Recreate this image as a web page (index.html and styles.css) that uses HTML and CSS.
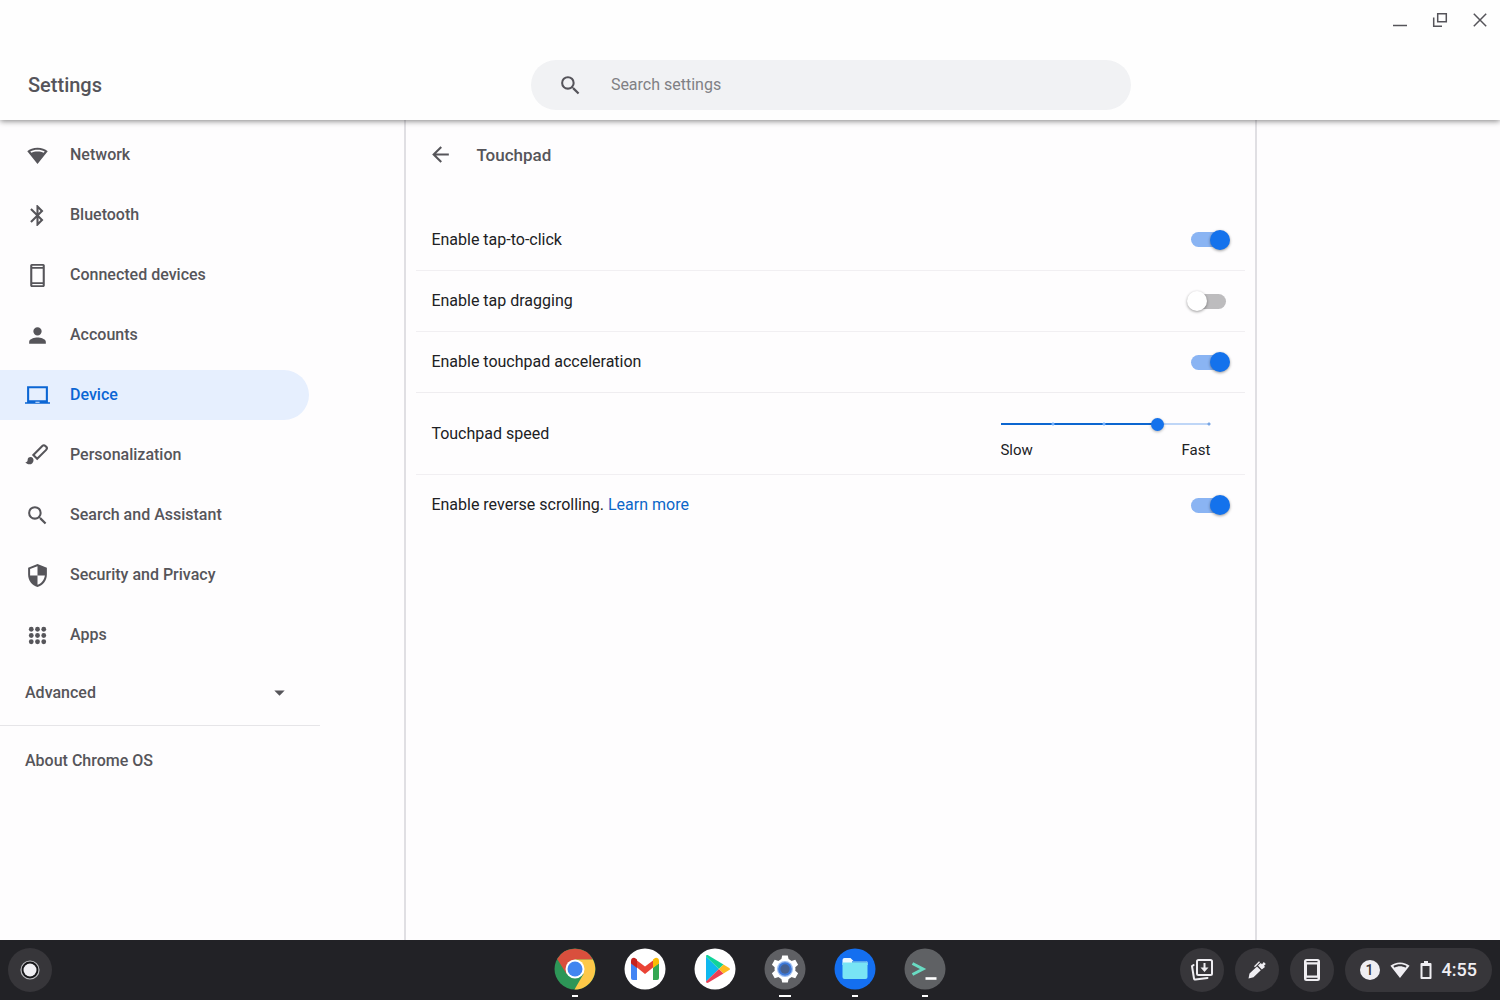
FILE: index.html
```html
<!DOCTYPE html>
<html lang="en">
<head>
<meta charset="utf-8">
<meta name="viewport" content="width=device-width, initial-scale=1">
<title>Settings - Touchpad</title>
<link rel="stylesheet" href="styles.css">
</head>
<body>
<header class="header">
  <div class="titlebar">
    <button class="window-button" aria-label="Minimize"><svg width="16" height="16" viewBox="0 0 16 16"><path d="M1 13.500h14" class="line"/></svg></button>
    <button class="window-button" aria-label="Restore"><svg width="16" height="16" viewBox="0 0 16 16"><path d="M5.700 1.700h8.600v8h-8.600zM1.700 5.500v8.800h8.300" class="line"/></svg></button>
    <button class="window-button" aria-label="Close"><svg width="16" height="16" viewBox="0 0 16 16"><path d="M1.800 1.800l12.400 12.400M14.200 1.800L1.800 14.200" class="line"/></svg></button>
  </div>
  <div class="toolbar columns">
    <h1 class="title">Settings</h1>
    <label class="search">
      <svg class="icon" viewBox="0 0 24 24"><path d="M15.500 14h-.79l-.28-.27A6.470 6.470 0 0 0 16 9.500 6.500 6.500 0 1 0 9.500 16c1.610 0 3.090-.59 4.230-1.570l.27.28v.79l5 4.990L20.490 19l-4.990-5zm-6 0C7.010 14 5 11.990 5 9.500S7.010 5 9.500 5 14 7.010 14 9.500 11.990 14 9.500 14z"/></svg>
      <input class="search-input" type="text" placeholder="Search settings" aria-label="Search settings">
    </label>
  </div>
</header>

<div class="body columns">
  <nav class="sidebar" aria-label="Settings sections">
    <a class="nav-item" href="#network"><svg class="icon" viewBox="0 0 24 24"><path fill-rule="evenodd" d="M12 4.500C8 4.500 4.500 5.800 2.200 7.900L12 20.200 21.800 7.900C19.500 5.800 16 4.500 12 4.500zM5.100 8.200C7 7.100 9.400 6.500 12 6.500s5 .6 6.900 1.700l-.9 1.200C16.300 8.600 14.200 8.200 12 8.200s-4.300.4-6 1.200z"/></svg>Network</a>
    <a class="nav-item" href="#bluetooth"><svg class="icon" viewBox="0 0 24 24"><path d="M17.710 7.710L12 2h-1v7.590L6.410 5 5 6.410 10.590 12 5 17.590 6.410 19 11 14.410V22h1l5.710-5.710-4.300-4.290 4.300-4.290zM13 5.830l1.880 1.880L13 9.590V5.830zm1.880 10.460L13 18.170v-3.760l1.880 1.880z"/></svg>Bluetooth</a>
    <a class="nav-item" href="#devices"><svg class="icon" viewBox="0 0 24 24"><path fill-rule="evenodd" d="M6.500 1h11C18.300 1 19 1.700 19 2.500v19c0 .8-.7 1.500-1.500 1.500h-11C5.700 23 5 22.300 5 21.500v-19C5 1.700 5.700 1 6.500 1zM7 2.600v1.300h10V2.600zM7 5.500v13h10v-13zM7 20.100v1.300h10v-1.300z"/></svg>Connected devices</a>
    <a class="nav-item" href="#accounts"><svg class="icon" viewBox="0 0 24 24"><path d="M12 12a4 4 0 1 0 0-8 4 4 0 0 0 0 8zm0 2c-2.670 0-8 1.340-8 4v2h16v-2c0-2.660-5.330-4-8-4z"/></svg>Accounts</a>
    <a class="nav-item selected" href="#device" aria-current="page"><svg class="icon" viewBox="0 0 24 24"><path fill-rule="evenodd" d="M2 3h20v15.500h2V20H0v-1.500h2zM4 5v11.500h16V5zM10 18v.9h4V18z"/></svg>Device</a>
    <a class="nav-item" href="#personalization"><svg class="icon" viewBox="0 0 24 24"><path d="M5.500 13.500a3 3 0 0 0-3 3c0 1.300-1.200 2-2.300 2 1 1.200 2.500 2 4 2a4 4 0 0 0 4-4c0-1.700-1.100-3-2.700-3z"/><path d="M8 11.500l8.600-8.600c1-1 2.100-.9 2.900-.1l.9.9c.8.800.9 1.900-.1 2.900l-8.600 8.600z" fill="none" stroke="currentColor" stroke-width="2"/></svg>Personalization</a>
    <a class="nav-item" href="#search"><svg class="icon" viewBox="0 0 24 24"><path d="M15.500 14h-.79l-.28-.27A6.470 6.470 0 0 0 16 9.500 6.500 6.500 0 1 0 9.500 16c1.610 0 3.090-.59 4.230-1.570l.27.28v.79l5 4.990L20.490 19l-4.990-5zm-6 0C7.010 14 5 11.990 5 9.500S7.010 5 9.500 5 14 7.010 14 9.500 11.990 14 9.500 14z"/></svg>Search and Assistant</a>
    <a class="nav-item" href="#privacy"><svg class="icon" viewBox="0 0 24 24"><path fill-rule="evenodd" d="M12 1L3 4.500V11c0 5.550 3.840 10.740 9 12 5.160-1.260 9-6.450 9-12V4.500zM12 3v9H4.900V5.700zM12 12h7.100c-.6 4.200-3.300 7.700-7.100 8.900z"/></svg>Security and Privacy</a>
    <a class="nav-item" href="#apps"><svg class="icon" viewBox="0 0 24 24"><g><circle cx="6" cy="6" r="2.300"/><circle cx="12" cy="6" r="2.300"/><circle cx="18" cy="6" r="2.300"/><circle cx="6" cy="12" r="2.300"/><circle cx="12" cy="12" r="2.300"/><circle cx="18" cy="12" r="2.300"/><circle cx="6" cy="18" r="2.300"/><circle cx="12" cy="18" r="2.300"/><circle cx="18" cy="18" r="2.300"/></g></svg>Apps</a>
    <button class="advanced" aria-expanded="false">Advanced<svg class="icon" viewBox="0 0 24 24"><path d="M7 10l5 5 5-5z"/></svg></button>
    <a class="about" href="#about">About Chrome OS</a>
  </nav>

  <main class="panel">
    <div class="panel-header">
      <button class="back" aria-label="Back"><svg class="icon" viewBox="0 0 24 24"><path d="M20 11H7.830l5.590-5.590L12 4l-8 8 8 8 1.410-1.410L7.830 13H20v-2z"/></svg></button>
      <h2 class="subtitle">Touchpad</h2>
    </div>
    <div class="row"><label for="tap">Enable tap-to-click</label><input class="toggle" id="tap" type="checkbox" checked></div>
    <div class="row"><label for="drag">Enable tap dragging</label><input class="toggle" id="drag" type="checkbox"></div>
    <div class="row"><label for="accel">Enable touchpad acceleration</label><input class="toggle" id="accel" type="checkbox" checked></div>
    <div class="row row-tall">
      <label for="speed">Touchpad speed</label>
      <div class="speed">
        <input class="slider" id="speed" type="range" min="1" max="5" value="4">
        <div class="speed-labels"><span>Slow</span><span>Fast</span></div>
      </div>
    </div>
    <div class="row"><span><label for="reverse">Enable reverse scrolling.</label> <a class="link" href="#learn">Learn more</a></span><input class="toggle" id="reverse" type="checkbox" checked></div>
  </main>
</div>

<footer class="shelf">
  <div class="shelf-start">
    <button class="tray-button" aria-label="Launcher"><svg width="22" height="22" viewBox="0 0 22 22"><circle cx="11" cy="11" r="9" fill="#161619" stroke="#b8b8bc" stroke-width="1.200"/><circle cx="11" cy="11" r="6.500" fill="#f0eff3"/></svg></button>
  </div>
  <div class="apps">
    <button class="app running" aria-label="Chrome"><svg width="42" height="42" viewBox="0 0 42 42"><circle cx="21" cy="21" r="20.500" fill="#2d9657"/><path d="M21 21L3.200 11A20.500 20.500 0 0 1 38.900 11.500H21z" fill="#d94f3d"/><path d="M21 11.500h17.900A20.500 20.500 0 0 1 20.500 41.500L29.500 26z" fill="#fdc848"/><path d="M3.200 11L12.600 26 18 11.500z" fill="#d94f3d"/><circle cx="21" cy="21" r="9.500" fill="#fff"/><circle cx="21" cy="21" r="7.500" fill="#4285f0"/></svg></button>
    <button class="app" aria-label="Gmail"><svg width="42" height="42" viewBox="0 0 42 42"><circle cx="21" cy="21" r="20.500" fill="#fff"/><path d="M7 15l6 4.500V32H9a2 2 0 0 1-2-2z" fill="#4285f4"/><path d="M29 19.500l6-4.500v15a2 2 0 0 1-2 2h-4z" fill="#34a853"/><path d="M13 12.500l8 6 8-6v7L21 26l-8-6.500z" fill="#ea4335"/><path d="M7 15v-2c0-3 3-4.200 5-2.300l1 .8v8.500l-6-4.500z" fill="#c5221f"/><path d="M35 15v-2c0-3-3-4.200-5-2.300l-1 .8v8.500l6-4.500z" fill="#fbbc04"/></svg></button>
    <button class="app" aria-label="Play Store"><svg width="42" height="42" viewBox="0 0 42 42"><circle cx="21" cy="21" r="20.500" fill="#fff"/><path d="M12 8.500v25l13-12.500z" fill="#10b8ef"/><path d="M12 8.500c0-1.500 1.200-1.800 2.500-1.100L29.500 16.500 25 21z" fill="#12d39a"/><path d="M12 33.500c0 1.500 1.200 1.800 2.500 1.100L29.500 25.500 25 21z" fill="#ec4055"/><path d="M29.500 16.500l5.700 3.400c1 .7 1 1.600 0 2.200l-5.700 3.400L25 21z" fill="#fdbb20"/></svg></button>
    <button class="app running active" aria-label="Settings"><svg width="42" height="42" viewBox="0 0 42 42"><circle cx="21" cy="21" r="20.500" fill="#5f6064"/><g fill="#fff"><circle cx="21" cy="21" r="10.500"/><path id="tooth" d="M17 13l1.200-5.500h5.600L25 13v16l-1.200 5.500h-5.600L17 29z"/><use href="#tooth" transform="rotate(60 21 21)"/><use href="#tooth" transform="rotate(120 21 21)"/></g><circle cx="21" cy="21" r="8" fill="#9dbdf0"/><circle cx="21" cy="21" r="6.800" fill="#3d78d8"/><circle cx="21" cy="21" r="4.700" fill="#48618f"/></svg></button>
    <button class="app running" aria-label="Files"><svg width="42" height="42" viewBox="0 0 42 42"><circle cx="21" cy="21" r="20.500" fill="#146ff0"/><path d="M8.500 12a2 2 0 0 1 2-2h6l3 3H32a1.500 1.500 0 0 1 1.500 1.500V17h-25z" fill="#edf8ff"/><path d="M18 13h14a1.500 1.500 0 0 1 1.500 1.500V16H18z" fill="#5ba8ed"/><path d="M8.500 14.500h25V29a2 2 0 0 1-2 2h-21a2 2 0 0 1-2-2z" fill="#78e4f5"/></svg></button>
    <button class="app running" aria-label="Terminal"><svg width="42" height="42" viewBox="0 0 42 42"><circle cx="21" cy="21" r="20.500" fill="#5f6164"/><path d="M8.500 15.500l10.500 5.500-10.500 5.500" fill="none" stroke="#69dbc3" stroke-width="3"/><path d="M21.500 29.200h11v2.600h-11z" fill="#fff"/></svg></button>
  </div>
  <div class="tray">
    <button class="tray-button" aria-label="Holding space"><svg width="24" height="24" viewBox="0 0 24 24"><g fill="none" stroke="currentColor" stroke-width="2"><rect x="7" y="2" width="15" height="15" rx="1.500"/><path d="M3.600 7L2 8.200l2 12.300c.1.800.7 1.200 1.500 1.100L17.500 20" stroke-linecap="round"/></g><path d="M13.500 5h2v4.500h3l-4 4.500-4-4.500h3z"/></svg></button>
    <button class="tray-button" aria-label="Stylus tools"><svg width="24" height="24" viewBox="0 0 24 24"><path d="M3.500 20.500l1-5 7.500-7 3.800 3.800-7.300 7zM13 7.600l2.800-2.600 1.200 1.200L18.800 4l2 2-1.800 1.800 1 1.200-3.200 2.400z"/><path d="M9.500 8.800l5-5" fill="none" stroke="currentColor" stroke-width="1.500"/></svg></button>
    <button class="tray-button" aria-label="Phone Hub"><svg width="24" height="24" viewBox="0 0 24 24"><path fill-rule="evenodd" d="M6.500 1h11A2.500 2.500 0 0 1 20 3.500v17a2.500 2.500 0 0 1-2.500 2.500h-11A2.500 2.500 0 0 1 4 20.500v-17A2.500 2.500 0 0 1 6.500 1zM7 6.500v11h10v-11zM6.500 3v1.200h11V3zM6.500 19.800V21h11v-1.200z"/></svg></button>
    <button class="status" aria-label="Status, 4:55">
      <span class="badge">1</span>
      <svg width="20" height="20" viewBox="0 0 24 24"><path fill-rule="evenodd" d="M12 3C7.500 3 3.500 4.500.5 7L12 21.500 23.500 7C20.500 4.500 16.500 3 12 3zM4 7.300C6.200 5.900 9 5.200 12 5.200s5.800.7 8 2.100l-1.500 1.900C16.600 8.200 14.500 7.500 12 7.500s-4.600.7-6.500 1.700z"/></svg>
      <svg width="12" height="20" viewBox="0 0 12 20"><path fill-rule="evenodd" d="M4 1h4v2h2.500a1 1 0 0 1 1 1v14a1 1 0 0 1-1 1h-9a1 1 0 0 1-1-1V4a1 1 0 0 1 1-1H4zM2.500 6v11h7V6z"/></svg>
      <span class="clock">4:55</span>
    </button>
  </div>
</footer>
</body>
</html>
```
FILE: styles.css
```css
* {
  box-sizing: border-box;
}

body {
  margin: 0;
  min-height: 100vh;
  display: flex;
  flex-direction: column;
  background: #fefdfe;
  color: #202124;
  font: 16px/24px Roboto, sans-serif;
}

button {
  padding: 0;
  border: 0;
  background: none;
  color: inherit;
  font: inherit;
}

a {
  color: inherit;
  text-decoration: none;
}

svg {
  fill: currentColor;
  flex: none;
}

.icon {
  width: 25px;
  height: 25px;
}

.line {
  fill: none;
  stroke: currentColor;
  stroke-width: 1.5;
}

.columns {
  display: grid;
  grid-template-columns: minmax(320px, 5fr) minmax(0, 853px) 3fr;
}

/* Window header */
.header {
  z-index: 1;
  background: #fefefe;
  color: #55545a;
  box-shadow: 0 1px 6px rgba(0, 0, 0, 0.5);
}

.titlebar {
  display: flex;
  justify-content: flex-end;
  height: 40px;
}

.window-button {
  display: grid;
  place-items: center;
  width: 40px;
}

.toolbar {
  height: 80px;
  padding-top: 20px;
}

.title {
  margin: 0;
  padding-left: 28px;
  font-size: 20px;
  line-height: 50px;
  font-weight: 500;
}

.search {
  justify-self: center;
  display: flex;
  align-items: center;
  gap: 28px;
  width: 100%;
  max-width: 600px;
  height: 50px;
  padding: 0 27px;
  border-radius: 25px;
  background: #f1f2f4;
}

.search-input {
  flex: 1;
  min-width: 0;
  padding: 0;
  border: 0;
  outline: 0;
  background: none;
  font: inherit;
}

.search-input::placeholder {
  color: #808084;
}

/* Sidebar */
.body {
  flex: 1;
}

.sidebar {
  display: flex;
  flex-direction: column;
  gap: 10px;
  width: 320px;
  padding-top: 10px;
  color: #56555a;
  font-weight: 500;
}

.nav-item {
  display: flex;
  align-items: center;
  gap: 20px;
  height: 50px;
  margin-right: 11px;
  padding-left: 25px;
  border-radius: 0 25px 25px 0;
}

.selected {
  background: #e6effe;
  color: #0b66d4;
}

.advanced {
  display: flex;
  align-items: center;
  justify-content: space-between;
  height: 66px;
  margin-top: -10px;
  padding: 0 28px 0 25px;
  border-bottom: 1px solid #e6e5e8;
}

.about {
  padding: 13px 25px;
}

/* Touchpad page */
.panel {
  padding: 0 10px;
  border: solid #e0dfe3;
  border-width: 0 2px;
}

.panel-header {
  display: flex;
  align-items: center;
  gap: 23px;
  height: 69px;
  margin-bottom: 20px;
  padding-left: 12px;
  color: #56555a;
}

.back {
  display: flex;
}

.subtitle {
  margin: 0;
  font-size: 17px;
  font-weight: 500;
}

.row {
  display: flex;
  align-items: center;
  justify-content: space-between;
  height: 61px;
  padding: 0 15px;
}

.row + .row {
  border-top: 1px solid #f1eff2;
}

.row-tall {
  height: 82px;
}

.row + .row-tall {
  border-top-color: #efedf0;
}

.link {
  color: #0b66c8;
}

.toggle {
  appearance: none;
  display: flex;
  align-items: center;
  width: 35px;
  height: 15px;
  margin: 0 4px;
  border-radius: 8px;
  background: #bdbcbe;
}

.toggle::before {
  content: "";
  width: 20px;
  height: 20px;
  margin-left: -4px;
  border-radius: 50%;
  background: #fff;
  box-shadow: 0 1px 3px rgba(0, 0, 0, 0.4);
}

.toggle:checked {
  justify-content: flex-end;
  background: #8ab4f3;
}

.toggle:checked::before {
  margin-right: -4px;
  background: #1472ec;
}

.speed {
  width: 210px;
  margin-right: 20px;
  padding-top: 12px;
  font-size: 15px;
}

.slider {
  appearance: none;
  display: block;
  width: 221px;
  height: 14px;
  margin: 0 -5px 7px;
  background:
    radial-gradient(circle, #77a5e3 1px, transparent 2px) 212px 0 / 4px 14px no-repeat,
    radial-gradient(circle, #71b0ff 1px, transparent 2px) 56px 0 / 4px 14px no-repeat,
    radial-gradient(circle, #71b0ff 1px, transparent 2px) 107px 0 / 4px 14px no-repeat,
    linear-gradient(#0c66d0, #0c66d0) 6px 6px / 156px 2px no-repeat,
    linear-gradient(#bfd6f7, #bfd6f7) 162px 6px / 53px 2px no-repeat;
}

.slider::-webkit-slider-thumb {
  appearance: none;
  width: 13px;
  height: 13px;
  border-radius: 50%;
  background: #1472ec;
  box-shadow: 0 1px 3px rgba(0, 0, 0, 0.3);
}

.speed-labels {
  display: flex;
  justify-content: space-between;
}

/* Shelf */
.shelf {
  display: grid;
  grid-template-columns: 1fr auto 1fr;
  align-items: center;
  height: 60px;
  padding: 0 8px;
  background: #222226;
  color: #efeef2;
}

.tray-button {
  display: grid;
  place-items: center;
  width: 44px;
  height: 44px;
  border-radius: 50%;
  background: #37363a;
}

.apps {
  display: flex;
}

.app {
  display: grid;
  grid-template-rows: 42px 2px;
  justify-items: center;
  align-content: end;
  row-gap: 5px;
  width: 70px;
  height: 54px;
}

.running::after {
  content: "";
  width: 6px;
  height: 2px;
  background: #fff;
}

.active::after {
  width: 12px;
}

.tray {
  display: flex;
  justify-content: flex-end;
  gap: 11px;
}

.status {
  display: flex;
  align-items: center;
  gap: 10px;
  height: 44px;
  padding: 0 15px;
  border-radius: 22px;
  background: #37363a;
  font-weight: 500;
}

.badge {
  width: 20px;
  border-radius: 50%;
  background: #efeef2;
  color: #37363a;
  font-size: 14px;
  line-height: 20px;
}

.clock {
  font-size: 18px;
}
```
